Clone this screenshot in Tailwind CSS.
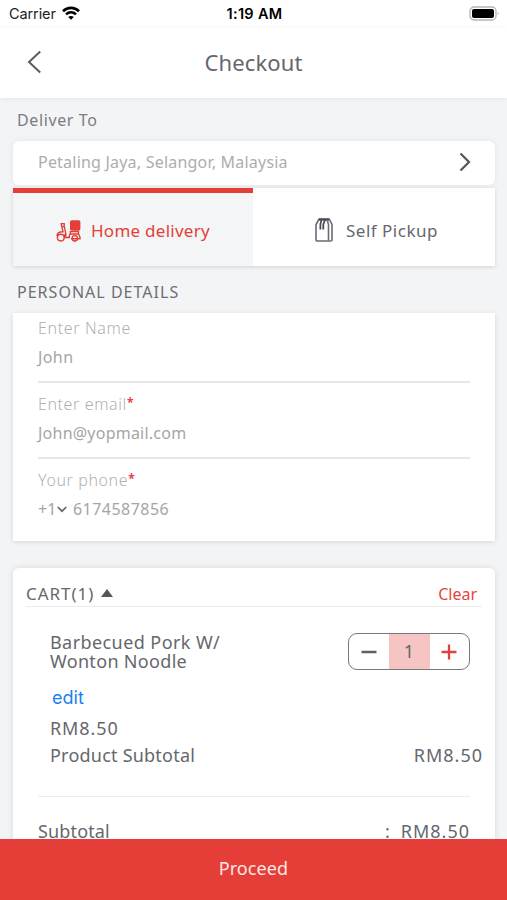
<!DOCTYPE html>
<html lang="en">
<head>
    <meta charset="UTF-8">
    <meta name="viewport" content="width=device-width, initial-scale=1.0">
    <title>Checkout</title>
    <script src="https://cdn.jsdelivr.net/npm/@tailwindcss/browser@4"></script>
</head>
<body class="bg-[#f3f4f6] font-['Noto_Sans',sans-serif] text-[#66676c]">
    <div class="flex h-[900px] w-[507px] flex-col overflow-hidden">
        <!-- Status bar -->
        <div class="grid h-7 shrink-0 grid-cols-3 items-center bg-white pr-[7px] pl-[9px] font-['Inter',sans-serif] text-[14.5px] text-black">
            <div class="flex items-center gap-1.5">
                <span class="tracking-[-0.1px] text-[#222]">Carrier</span>
                <svg class="-mt-0.5 h-[14px] w-[18px]" viewBox="0 0 18 14" fill="none" stroke="#000" stroke-width="2.6">
                    <path d="M1 5.2C5.6.8 12.4.8 17 5.2"/>
                    <path d="M4 8.4c2.9-2.7 7.1-2.7 10 0"/>
                    <path d="M9 13.8 6.2 11c1.6-1.4 4-1.4 5.6 0z" fill="#000" stroke="none"/>
                </svg>
            </div>
            <div class="text-center text-[14.5px] font-semibold tracking-[0.3px] whitespace-nowrap">1:19 AM</div>
            <svg class="-mt-0.5 h-[15px] w-[31px] justify-self-end" viewBox="0 0 31 15">
                <rect x="1" y="1" width="26" height="13" rx="4" fill="#fff" stroke="#b5b5b5" stroke-width="1.3"/>
                <rect x="3" y="3" width="22" height="9" rx="2" fill="#000"/>
                <path d="M28.6 5.5q2 2 0 4z" fill="#b5b5b5"/>
            </svg>
        </div>

        <!-- Header -->
        <div class="grid h-[70px] shrink-0 grid-cols-3 items-center bg-white pb-0.5 shadow-[0_1px_6px_rgba(0,0,0,0.06)]">
            <svg class="ml-[27px] h-6 w-4" viewBox="0 0 16 24" fill="none" stroke="#5a5b62" stroke-width="2">
                <path d="M13.2 1.5 2 12l11.2 10.5"/>
            </svg>
            <h1 class="text-center text-[22px] tracking-[0.1px]">Checkout</h1>
        </div>

        <div class="flex min-h-0 flex-1 flex-col overflow-hidden pr-3 pl-[13px]">
            <!-- Delivery address -->
            <h2 class="h-[43px] shrink-0 pl-1 text-[16px] leading-[45px] tracking-[0.62px] text-[#7b7c80]">Deliver To</h2>
            <div class="flex h-11 shrink-0 items-center justify-between rounded-md bg-white pr-6 pl-[25px] shadow-[0_0_6px_rgba(0,0,0,0.07)]">
                <span class="-mt-0.5 text-[16px] tracking-[0.21px] text-[#adadad]">Petaling Jaya, Selangor, Malaysia</span>
                <svg class="-mt-0.5 h-5 w-3" viewBox="0 0 12 20" fill="none" stroke="#55565c" stroke-width="2.2">
                    <path d="m1.5 1.5 8.5 8.5-8.5 8.5"/>
                </svg>
            </div>

            <!-- Delivery / pickup tabs -->
            <div class="mt-[3px] flex h-[78px] shrink-0 bg-white shadow-[0_1px_4px_rgba(0,0,0,0.14)]">
                <div class="flex w-[240px] items-center border-t-5 border-[#e53e38] bg-[#f3f5f6] pl-[43px] text-[#e53e38]">
                    <svg class="mt-0.5 mr-2.5 h-[22px] w-[25px]" viewBox="0 0 25 22" fill="none" stroke="#e53e38" stroke-width="1.4">
                        <rect x="14.7" y="1" width="9" height="9" rx="1" fill="#e53e38"/>
                        <circle cx="4.8" cy="17.6" r="3.4"/>
                        <path d="M5.200 3.600h3v3H5.800zM8.200 6.200l1.600 7.400M5.800 6.600l1.200 5.200C3.400 11.600 1.200 13.400.9 16M9.800 13.600c-1 1-1.600 2.400-1.500 4M9.800 13.600v4M8.300 17.600H14"/>
                        <path d="M14.300 11.600h8.200v2.400h-8.200zM13.800 14c0 2-.6 3-2 3.600M22.500 14l1.500 3.200v1.600H15"/>
                        <circle cx="18.800" cy="18.300" r="2.700"/>
                    </svg>
                    <span class="pt-0.5 text-[17px] tracking-[0.26px]">Home delivery</span>
                </div>
                <div class="flex flex-1 items-center pt-[5px] pl-[62px]">
                    <svg class="mr-[13px] h-6 w-[18px]" viewBox="0 0 18 24" fill="none" stroke="#6a6a78" stroke-width="1.6">
                        <path d="M4 1h10.200L17 6.500v15.200a1.300 1.300 0 0 1-1.300 1.300H2.300A1.300 1.300 0 0 1 1 21.700V6.500z"/>
                        <path d="M4 1.600h10" stroke="#4c4c56" stroke-width="2.200"/>
                        <path d="M6.500 2 5.400 6v5.500M10 2 8.300 6.500v5" stroke="#4c4c56" stroke-width="1.800"/>
                        <path d="M12.200 2l1.300 4.500v16"/>
                    </svg>
                    <span class="pt-0.5 text-[17px] tracking-[0.5px]">Self Pickup</span>
                </div>
            </div>

            <!-- Personal details -->
            <h2 class="h-[47px] shrink-0 pl-1 text-[16px] leading-[53px] tracking-[1.02px] text-[#6d6e73]">PERSONAL DETAILS</h2>
            <div class="h-[228px] shrink-0 bg-white pr-[25px] pl-[25px] text-[16px] text-[#a5a5a5] shadow-[0_1px_5px_rgba(0,0,0,0.12)]">
                <div class="h-[70px] border-b-2 border-[#e6e6e7]">
                    <div class="h-[29px] leading-[31px] font-light tracking-[0.65px] text-[#b0b0b0]">Enter Name</div>
                    <div class="h-[29px] leading-[31px] tracking-[0.4px]">John</div>
                </div>
                <div class="h-[76px] border-b-2 border-[#e6e6e7] pt-[6px]">
                    <div class="flex h-[29px] leading-[31px] font-light text-[#b0b0b0]"><span class="tracking-[0.6px]">Enter email</span><span class="-mt-0.5 text-[12px] font-bold text-[#e8434a]">*</span></div>
                    <div class="h-[29px] leading-[31px] tracking-[0.23px]">John@yopmail.com</div>
                </div>
                <div class="pt-[6px]">
                    <div class="flex h-[29px] leading-[31px] font-light text-[#b0b0b0]"><span class="tracking-[0.6px]">Your phone</span><span class="-mt-0.5 text-[12px] font-bold text-[#e8434a]">*</span></div>
                    <div class="flex h-[31px] items-center leading-[31px]">
                        <span class="w-[19px]">+1</span>
                        <svg class="mr-1.5 h-[7px] w-[10px]" viewBox="0 0 10 7" fill="none" stroke="#66676b" stroke-width="1.7">
                            <path d="m.8 1 4.200 4.200L9.200 1"/>
                        </svg>
                        <span class="tracking-[0.46px]">6174587856</span>
                    </div>
                </div>
            </div>

            <!-- Cart -->
            <div class="mt-[27px] h-[400px] shrink-0 rounded-md bg-white shadow-[0_0_7px_rgba(0,0,0,0.11)]">
                <div class="mx-[13px] flex h-[39px] items-center border-b border-[#ececec] pt-3.5 pr-[5px]">
                    <span class="-mt-px text-[17px] tracking-[0.95px]">CART(1)</span>
                    <svg class="-mt-0.5 ml-[7px] h-2 w-3" viewBox="0 0 12 8"><path d="M6 0l6 8H0z" fill="#55565c"/></svg>
                    <span class="ml-auto text-[16px] text-[#e0483f]">Clear</span>
                </div>
                <div class="flex justify-between pt-[26px] pr-[25px] pl-[37px]">
                    <div class="text-[18px] leading-[19px]">
                        <div class="tracking-[0.42px]">Barbecued Pork W/</div>
                        <div class="tracking-[0.32px]">Wonton Noodle</div>
                    </div>
                    <div class="flex h-[37px] w-[122px] overflow-hidden rounded-[9px] border-[1.5px] border-[#77787c]">
                        <button class="flex flex-1 items-center justify-center">
                            <svg class="size-4" viewBox="0 0 16 16" stroke="#5f6068" stroke-width="2.300"><path d="M.5 8h15"/></svg>
                        </button>
                        <span class="w-[41px] bg-[#f6c5c3] text-center text-[18px] leading-[34px]">1</span>
                        <button class="flex flex-1 items-center justify-center">
                            <svg class="size-4" viewBox="0 0 16 16" stroke="#e0413a" stroke-width="2.300"><path d="M.5 8h15M8 .5v15"/></svg>
                        </button>
                    </div>
                </div>
                <div class="pt-[15px] pl-[39px] font-['Inter',sans-serif] text-[18px] leading-6 text-[#1a80f0]">edit</div>
                <div class="pt-[5px] pl-[37px] text-[18px] leading-[27px] tracking-[0.9px]">RM8.50</div>
                <div class="flex justify-between pr-3 pl-[37px] text-[18px] leading-[27px]">
                    <span class="tracking-[0.22px]">Product Subtotal</span>
                    <span class="tracking-[1px]">RM8.50</span>
                </div>
                <div class="mx-[25px] mt-[27px] flex border-t border-[#ededed] pt-[21px] text-[18px] leading-[27px]">
                    <span class="tracking-[0.15px]">Subtotal</span>
                    <span class="mr-[11px] ml-auto">:</span>
                    <span class="tracking-[1px]">RM8.50</span>
                </div>
            </div>
        </div>

        <!-- Proceed button -->
        <button class="h-[61px] shrink-0 bg-[#e53e38] pb-0.5 text-[18px] tracking-[0.1px] text-[#fde6e4]">Proceed</button>
    </div>
</body>
</html>
